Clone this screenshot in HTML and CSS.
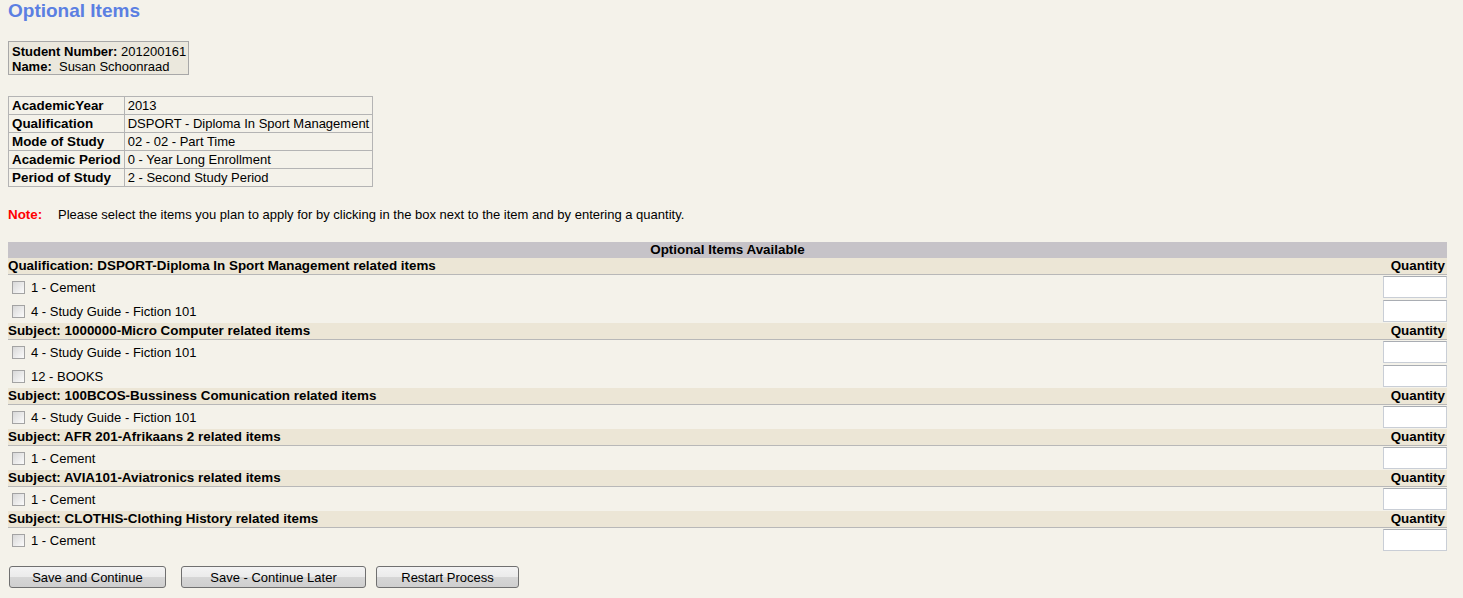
FILE: index.html
```html
<!DOCTYPE html>
<html lang="en">
<head>
  <meta charset="UTF-8" />
  <title>Optional Items</title>
  <link rel="stylesheet" href="styles.css">
</head>
<body>
  <h1>Optional Items</h1>

  <div class="student">
    <div><b>Student Number:</b> 201200161</div>
    <div><b>Name:</b>&nbsp; Susan Schoonraad</div>
  </div>

  <table class="details">
    <tr><th>AcademicYear</th><td>2013</td></tr>
    <tr><th>Qualification</th><td>DSPORT - Diploma In Sport Management</td></tr>
    <tr><th>Mode of Study</th><td>02 - 02 - Part Time</td></tr>
    <tr><th>Academic Period</th><td>0 - Year Long Enrollment</td></tr>
    <tr><th>Period of Study</th><td>2 - Second Study Period</td></tr>
  </table>

  <p class="note"><span class="note-label">Note:</span>Please select the items you plan to apply for by clicking in the box next to the item and by entering a quantity.</p>

  <table class="items">
    <tr><th colspan="2" class="caption">Optional Items Available</th></tr>

    <tr class="group"><td>Qualification: DSPORT-Diploma In Sport Management related items</td><td class="qty-head">Quantity</td></tr>
    <tr class="item"><td><label><input type="checkbox"> 1 - Cement</label></td><td class="qty"><input type="text"></td></tr>
    <tr class="item"><td><label><input type="checkbox"> 4 - Study Guide - Fiction 101</label></td><td class="qty"><input type="text"></td></tr>

    <tr class="group"><td>Subject: 1000000-Micro Computer related items</td><td class="qty-head">Quantity</td></tr>
    <tr class="item"><td><label><input type="checkbox"> 4 - Study Guide - Fiction 101</label></td><td class="qty"><input type="text"></td></tr>
    <tr class="item"><td><label><input type="checkbox"> 12 - BOOKS</label></td><td class="qty"><input type="text"></td></tr>

    <tr class="group"><td>Subject: 100BCOS-Bussiness Comunication related items</td><td class="qty-head">Quantity</td></tr>
    <tr class="item"><td><label><input type="checkbox"> 4 - Study Guide - Fiction 101</label></td><td class="qty"><input type="text"></td></tr>

    <tr class="group"><td>Subject: AFR 201-Afrikaans 2 related items</td><td class="qty-head">Quantity</td></tr>
    <tr class="item"><td><label><input type="checkbox"> 1 - Cement</label></td><td class="qty"><input type="text"></td></tr>

    <tr class="group"><td>Subject: AVIA101-Aviatronics related items</td><td class="qty-head">Quantity</td></tr>
    <tr class="item"><td><label><input type="checkbox"> 1 - Cement</label></td><td class="qty"><input type="text"></td></tr>

    <tr class="group"><td>Subject: CLOTHIS-Clothing History related items</td><td class="qty-head">Quantity</td></tr>
    <tr class="item"><td><label><input type="checkbox"> 1 - Cement</label></td><td class="qty"><input type="text"></td></tr>
  </table>

  <div class="actions">
    <button class="btn-save">Save and Continue</button>
    <button class="btn-later">Save - Continue Later</button>
    <button class="btn-restart">Restart Process</button>
  </div>
</body>
</html>
```

FILE: styles.css
```css
body {
  font-family: "Liberation Sans", Arial, sans-serif;
  font-size: 13px;
  color: #000;
  background: #f4f2ea;
  margin: 0 8px;
}
b, th, .group td, .note-label {
  font-size: 13.4px;
  font-weight: bold;
}
h1 {
  margin: 0;
  font-size: 19px;
  line-height: 22px;
  color: #5b7fe2;
}
.student {
  display: inline-block;
  margin-top: 19px;
  padding: 2px 2px 0 3px;
  border: 1px solid #a8a8a8;
  background: #ebe8dd;
  line-height: 15px;
}
.student b {
  font-size: 13px;
}
.details {
  display: table;
  margin-top: 21px;
  border-collapse: collapse;
  border: 1px solid #a8a8a8;
}
.details th, .details td {
  border: 1px solid #b4b4b4;
  padding: 0 3px 0 3px;
  height: 17px;
  line-height: 17px;
  text-align: left;
  white-space: nowrap;
}
.note {
  margin: 20px 0 0;
  line-height: 16px;
}
.note-label {
  display: inline-block;
  width: 50px;
  color: #f00;
}
.items {
  width: 1439px;
  margin-top: 19px;
  border-collapse: collapse;
}
.caption {
  background: #c6c3c8;
  height: 16px;
  padding: 0;
  line-height: 16px;
  text-align: center;
}
.group td {
  background: #ece6d6;
  border-bottom: 1px solid #b8b8b8;
  height: 16px;
  padding: 0;
  line-height: 16px;
}
.group .qty-head {
  text-align: right;
  padding-right: 2px;
}
.item td {
  height: 24px;
  padding: 0;
}
.item label {
  display: flex;
  align-items: center;
  gap: 6px;
  padding-left: 4px;
}
.item input[type="checkbox"] {
  appearance: none;
  width: 13px;
  height: 13px;
  margin: 0;
  border: 1px solid #a3a3a3;
  background: linear-gradient(135deg, #d8d8d8, #fbfbfb);
}
.qty {
  width: 66px;
  text-align: right;
}
.qty input {
  width: 64px;
  height: 22px;
  box-sizing: border-box;
  margin: 0;
  border: 1px solid #c9ced6;
  border-top-color: #a9adb3;
  background: #fff;
  vertical-align: middle;
}
.actions {
  display: flex;
  margin-top: 14px;
  padding-left: 1px;
}
.actions button {
  height: 22px;
  margin: 0;
  padding: 0;
  font-family: inherit;
  font-size: 13px;
  color: #000;
  border: 1px solid #707070;
  border-radius: 3px;
  background: linear-gradient(#f3f3f3, #ebebeb 50%, #d6d6d6 51%, #cfcfcf);
}
.btn-save {
  width: 157px;
  margin-right: 15px !important;
}
.btn-later {
  width: 185px;
  margin-right: 10px !important;
}
.btn-restart {
  width: 143px;
}
```
